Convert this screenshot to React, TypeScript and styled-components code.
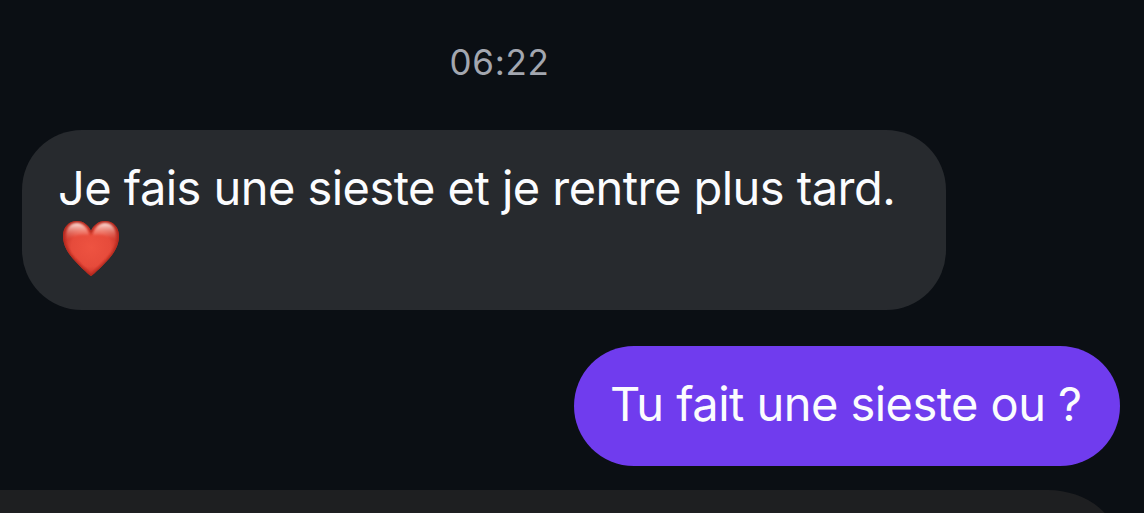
import React from "react";
import styled, { createGlobalStyle } from "styled-components";

const COLORS = {
  BACKGROUND: "#0b0f14",
  RECEIVED: "#272a2e",
  SENT: "#703cee",
  COMPOSER: "#1e1f21",
  TEXT: "#fbfcfe",
  TIME: "#a3a7b0",
};

const GlobalStyle = createGlobalStyle`
  body {
    margin: 0;
    background: ${COLORS.BACKGROUND};
    overflow: hidden;
  }
`;

const Screen = styled.main`
  box-sizing: border-box;
  display: flex;
  flex-direction: column;
  height: 513px;
  overflow: hidden;
  padding-top: 40px;
  background: ${COLORS.BACKGROUND};
  font-family: Inter, "Liberation Sans", sans-serif;
`;

const Time = styled.time`
  width: 999px;
  height: 44px;
  flex: none;
  margin-bottom: 46px;
  color: ${COLORS.TIME};
  font-size: 35px;
  letter-spacing: 0.7px;
  line-height: 44px;
  text-align: center;
`;

const Conversation = styled.section`
  display: flex;
  flex: none;
  flex-direction: column;
  gap: 36px;
  padding: 0 24px 0 22px;
`;

const Bubble = styled.div<{ $sent?: boolean }>`
  box-sizing: border-box;
  width: ${({ $sent }) => ($sent ? "546px" : "924px")};
  align-self: ${({ $sent }) => ($sent ? "flex-end" : "flex-start")};
  padding: 28px 36px 32px;
  border-radius: 60px;
  background: ${({ $sent }) => ($sent ? COLORS.SENT : COLORS.RECEIVED)};
`;

const Line = styled.p`
  height: 60px;
  margin: 0;
  color: ${COLORS.TEXT};
  font-size: 47px;
  letter-spacing: -0.55px;
  line-height: 59px;
  white-space: nowrap;
`;

const HeartLine = styled.div`
  display: flex;
  height: 60px;
  padding: 1px 0 0 4px;
  box-sizing: border-box;
`;

const Heart = styled.svg`
  display: block;
  width: 58px;
  height: 58px;
`;

const Composer = styled.footer`
  width: 1120px;
  height: 120px;
  flex: none;
  margin-top: 24px;
  border-top-right-radius: 72px 60px;
  background: ${COLORS.COMPOSER};
`;

const HEART_PATH =
  "M29 57C26 55 15 45 8 36C3 29 1 23 1 17C1 8 7 2 15 2C22 2 27 7 29 12C31 7 36 2 43 2C51 2 57 8 57 17C57 23 55 29 50 36C43 45 32 55 29 57Z";

const HeartIcon: React.FC = () => (
  <Heart viewBox="0 0 58 58" role="img" aria-label="Cœur rouge">
    <defs>
      <radialGradient id="heartFill" cx="50%" cy="48%" r="58%">
        <stop offset="0" stopColor="#ee5341" />
        <stop offset="0.6" stopColor="#e64b3b" />
        <stop offset="1" stopColor="#b92a20" />
      </radialGradient>
      <linearGradient id="heartShine" x1="0" y1="0" x2="0" y2="1">
        <stop offset="0" stopColor="#fff0ea" stopOpacity="0.95" />
        <stop offset="1" stopColor="#f47a68" stopOpacity="0" />
      </linearGradient>
      <clipPath id="heartClip">
        <path d={HEART_PATH} />
      </clipPath>
      <filter id="soft" x="-20%" y="-20%" width="140%" height="140%">
        <feGaussianBlur stdDeviation="1" />
      </filter>
    </defs>
    <path d={HEART_PATH} fill="url(#heartFill)" />
    <g clipPath="url(#heartClip)">
      <path
        d={HEART_PATH}
        fill="none"
        stroke="#b3261c"
        strokeWidth="3"
        filter="url(#soft)"
      />
      <g fill="url(#heartShine)" filter="url(#soft)">
        <path d="M4 17C4 8 9 4 15 4C21 4 26 9 27 16C21 15 10 16 4 21Z" />
        <path d="M54 17C54 8 49 4 43 4C37 4 32 9 31 16C37 15 48 16 54 21Z" />
      </g>
    </g>
  </Heart>
);

const App: React.FC = () => (
  <>
    <GlobalStyle />
    <Screen>
      <Time>06:22</Time>
      <Conversation>
        <Bubble>
          <Line>Je fais une sieste et je rentre plus tard.</Line>
          <HeartLine>
            <HeartIcon />
          </HeartLine>
        </Bubble>
        <Bubble $sent>
          <Line>Tu fait une sieste ou ?</Line>
        </Bubble>
      </Conversation>
      <Composer />
    </Screen>
  </>
);

export default App;
